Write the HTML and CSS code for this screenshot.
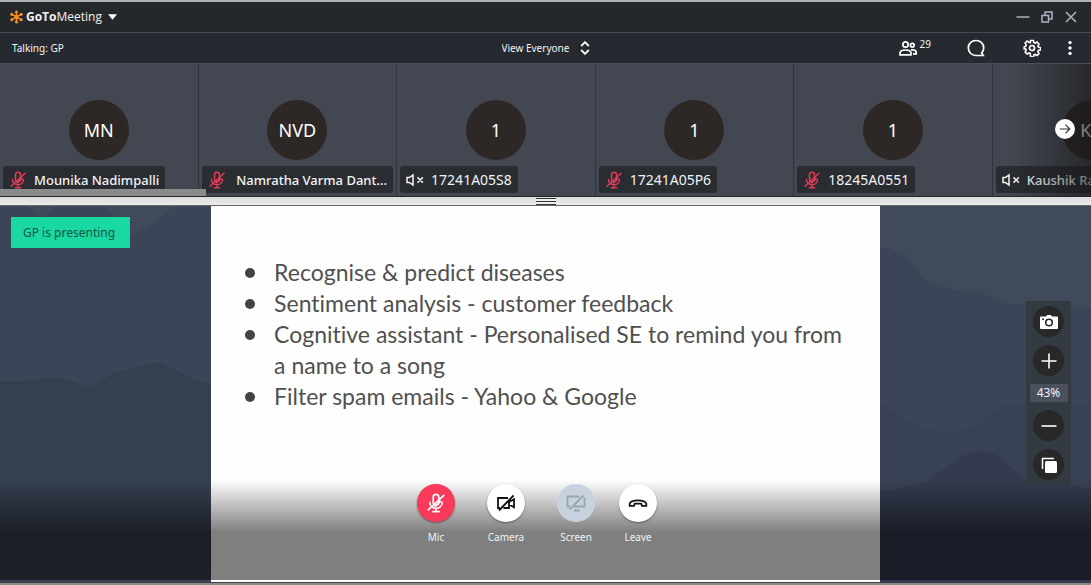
FILE: index.html
```html
<!DOCTYPE html>
<html lang="en">
<head>
<meta charset="utf-8">
<title>GoToMeeting</title>
<link rel="stylesheet" href="styles.css">
</head>
<body>
<svg class="defs" aria-hidden="true">
  <defs>
    <symbol id="mic-off" viewBox="0 0 18 18">
      <g fill="none" stroke="currentColor" stroke-width="1.5" stroke-linecap="round">
        <rect x="6.5" y="1.2" width="5" height="9.6" rx="2.5"/>
        <path d="M3.5 8.5c0 7 11 7 11 0M9 13.8v2.7M6.3 16.8h5.4M2 15.2L16 2.2M8.2 12L13 7.6"/>
      </g>
    </symbol>
    <symbol id="sound-off" viewBox="0 0 18 18">
      <g fill="none" stroke="currentColor" stroke-width="1.5">
        <path d="M1 6.600h2.400L7 3.900v10.200L3.400 11.400H1zM11.500 6.400l5.400 5.200M16.900 6.400l-5.400 5.200"/>
      </g>
    </symbol>
  </defs>
</svg>

<header class="titlebar">
  <button class="brand" type="button">
    <svg class="brand-mark" viewBox="0 0 14 14" aria-hidden="true">
      <g stroke="#f68d1f" stroke-width="1.5" fill="#f68d1f">
        <path d="M7 1.5v11M2.2 4.2l9.6 5.6M2.2 9.8l9.6-5.6"/>
        <g stroke="none"><circle cx="7" cy="7" r="2.3"/><circle cx="7" cy="1.7" r="1.7"/><circle cx="7" cy="12.300" r="1.7"/><circle cx="2" cy="4.1" r="1.7"/><circle cx="12" cy="4.1" r="1.7"/><circle cx="2" cy="9.9" r="1.7"/><circle cx="12" cy="9.9" r="1.7"/></g>
      </g>
    </svg>
    <span class="brand-name"><b>GoTo</b>Meeting</span>
    <svg class="brand-caret" viewBox="0 0 10 6" aria-hidden="true"><path d="M0 0h10L5 6z" fill="#fff"/></svg>
  </button>
  <div class="window-buttons">
    <button type="button" aria-label="Minimize"><svg viewBox="0 0 14 14"><path d="M.5 7h13"/></svg></button>
    <button type="button" aria-label="Restore"><svg viewBox="0 0 14 14"><path d="M2 5.500h6.500v6.500H2zM5 5.500V2h7v7H8.500"/></svg></button>
    <button type="button" aria-label="Close"><svg viewBox="0 0 14 14"><path d="M2 2l10 10M12 2L2 12"/></svg></button>
  </div>
</header>

<div class="toolbar">
  <p class="talking">Talking: GP</p>
  <label class="view">
    <select aria-label="View"><option>View Everyone</option></select>
    <svg viewBox="0 0 10 14" aria-hidden="true"><path d="M1.200 5L5 1.200 8.800 5M1.200 9L5 12.800 8.800 9"/></svg>
  </label>
  <div class="tools">
    <button class="people" type="button" aria-label="Attendees, 29">
      <svg viewBox="0 0 18 18"><circle cx="6.500" cy="5.500" r="2.700"/><circle cx="13.300" cy="6.200" r="1.900"/><path d="M1 15.800v-1.500c0-2 2-3.300 5.500-3.300s5.500 1.300 5.500 3.300v1.500zM12 10.900c3.300-.4 5.200.8 5.200 2.500v1.500H14"/></svg>
      <span>29</span>
    </button>
    <button type="button" aria-label="Chat"><svg viewBox="0 0 18 18"><path d="M9 1.500c4.500 0 7.700 3.100 7.700 7.300 0 2.200-.8 3.900-2 5.200l1.500 2.500H9c-4.600 0-7.700-3.400-7.700-7.700S4.500 1.500 9 1.500z"/></svg></button>
    <div class="tools-end">
      <button type="button" aria-label="Settings"><svg viewBox="0 0 18 18"><circle cx="9" cy="9" r="2.500"/><path d="M7.500 1h3l.5 2.300 1.300.5 2-1.200 2.100 2.100-1.200 2 .5 1.300 2.300.5v2.600l-2.300.5-.5 1.300 1.200 2-2.100 2.100-2-1.200-1.300.5-.5 2.300h-3L7 14.700l-1.300-.5-2 1.200-2.100-2.100 1.200-2-.5-1.300L0.600 9.900V7.800L2.300 7l.5-1.300-1.200-2 2.100-2.100 2 1.200L7 3.300z" transform="translate(.6 .6) scale(.94)"/></svg></button>
      <button type="button" aria-label="More"><svg class="dots" viewBox="0 0 18 18"><circle cx="9" cy="3.600" r="1.700"/><circle cx="9" cy="9" r="1.700"/><circle cx="9" cy="14.400" r="1.700"/></svg></button>
    </div>
  </div>
</div>

<section class="strip" aria-label="Attendees">
  <ul class="tiles">
    <li class="tile"><span class="avatar">MN</span><span class="name muted person"><svg><use href="#mic-off"/></svg>Mounika Nadimpalli</span></li>
    <li class="tile"><span class="avatar">NVD</span><span class="name muted person full"><svg><use href="#mic-off"/></svg>Namratha Varma Dant...</span></li>
    <li class="tile"><span class="avatar">1</span><span class="name"><svg><use href="#sound-off"/></svg>17241A05S8</span></li>
    <li class="tile"><span class="avatar">1</span><span class="name muted"><svg><use href="#mic-off"/></svg>17241A05P6</span></li>
    <li class="tile"><span class="avatar">1</span><span class="name muted"><svg><use href="#mic-off"/></svg>18245A0551</span></li>
    <li class="tile"><span class="avatar">KR</span><span class="name person"><svg><use href="#sound-off"/></svg>Kaushik Ra</span></li>
  </ul>
  <div class="strip-fade"></div>
  <button class="next" type="button" aria-label="Next attendees"><svg viewBox="0 0 20 20"><path d="M3.500 10h12.500M10.500 4.500L16 10l-5.500 5.500"/></svg></button>
  <div class="scroll-thumb"></div>
</section>

<div class="splitter"><span class="grip"></span></div>

<main class="stage">
  <svg class="scenery" viewBox="0 0 1091 376" preserveAspectRatio="none" aria-hidden="true">
    <rect width="1091" height="376" fill="#404a5b"/>
    <path d="M0 0h25l17 12L56 0h49l25 30 22-12L176 0h500l203 42h9l15 6c10 8 15 20 23 27l39 12 15-1 28 12h22l61 4v274H0z" fill="#3c4457"/>
    <path d="M0 175h25l30-4 20 5 15 6 20-13 25-7 18-5h9l13 7 20 10 16 4 668 19 41 24q30 12 60-4l23-17 88-3v179H0z" fill="#394254"/>
    <path d="M0 175h25l30-4 20 5 15 6 20-13 25-7 18-5h9l13 7 20 10 16 4v191H0z" fill="#363f50"/>
    <path d="M879 286l46-10 40-27q16-8 32 0l30 26 64 7v94H879z" fill="#343b4e"/>
  </svg>
  <article class="slide">
    <ul class="points">
      <li>Recognise &amp; predict diseases</li>
      <li>Sentiment analysis - customer feedback</li>
      <li>Cognitive assistant - Personalised SE to remind you from a name to a song</li>
      <li>Filter spam emails - Yahoo &amp; Google</li>
    </ul>
  </article>
  <p class="presenting">GP is presenting</p>
  <div class="controls">
    <div class="sharing">
      <div class="control"><button class="round red" type="button" aria-labelledby="mic-l"><svg><use href="#mic-off"/></svg></button><span id="mic-l">Mic</span></div>
      <div class="control"><button class="round" type="button" aria-labelledby="cam-l"><svg viewBox="0 0 20 20"><path d="M12 5H2v10h2M7.500 15H13V8.500M13 9l5-2.800v8L13 11.500M3 17.500L17.500 2.500"/></svg></button><span id="cam-l">Camera</span></div>
      <div class="control"><button class="round off" type="button" aria-labelledby="scr-l" disabled><svg viewBox="0 0 20 20"><path d="M13.500 3.500H1.500v10h2.500M8 13.500h10.500v-9M8 17.500h6M3.500 16.500L17.500 2.500"/></svg></button><span id="scr-l">Screen</span></div>
    </div>
    <div class="control"><button class="round" type="button" aria-labelledby="leave-l"><svg viewBox="0 0 20 20"><path d="M1.700 12.800v-2.300C3.500 6.300 16.500 6.300 18.300 10.500v2.300h-4.300l-.8-2.100H6.800L6 12.800z"/></svg></button><span id="leave-l">Leave</span></div>
  </div>
  <div class="zoom">
    <button type="button" aria-label="Snapshot"><svg viewBox="0 0 18 18"><path d="M1 3.500h5L7.200 2h3.600L12 3.500h5q1 0 1 1V15q0 1-1 1H1q-1 0-1-1V4.500q0-1 1-1z" fill="#fff"/><circle cx="9" cy="9.500" r="3.300" fill="#fff" stroke="#282828" stroke-width="1.600"/><circle cx="3" cy="6.200" r="1" fill="#282828"/></svg></button>
    <button type="button" aria-label="Zoom in"><svg viewBox="0 0 18 18"><path d="M9 1.500v15M1.500 9h15" stroke="#fff" stroke-width="1.600"/></svg></button>
    <output>43%</output>
    <button type="button" aria-label="Zoom out"><svg viewBox="0 0 18 18"><path d="M1.500 9h15" stroke="#fff" stroke-width="1.600"/></svg></button>
    <button type="button" aria-label="Fit"><svg viewBox="0 0 18 18"><rect x="5" y="5" width="12" height="12" rx="1.500" fill="#fff"/><path d="M2.500 13V2.500H14" fill="none" stroke="#fff" stroke-width="1.500"/></svg></button>
  </div>
</main>
<footer class="edge"></footer>
</body>
</html>
```
FILE: styles.css
```css
* { box-sizing: border-box; }

body {
  margin: 0;
  min-height: 100vh;
  display: flex;
  flex-direction: column;
  background: #272a2f;
  color: #f2f3f5;
  font-family: "Noto Sans", "Open Sans", sans-serif;
  font-size: 10px;
}

p, ul { margin: 0; padding: 0; }
ul { list-style: none; }

button, select {
  margin: 0;
  padding: 0;
  border: 0;
  background: none;
  color: inherit;
  font: inherit;
}

.defs { position: absolute; width: 0; height: 0; }

.titlebar {
  display: flex;
  justify-content: space-between;
  align-items: center;
  height: 33px;
  padding: 0 8px 0 10px;
  border-top: 2px solid #a9b5b3;
  border-bottom: 1px solid #474b52;
  background: #25282b;
}

.brand { display: flex; align-items: center; gap: 3px; }
.brand-mark { width: 13px; height: 14px; }
.brand-name { font-family: "Open Sans", sans-serif; font-size: 12px; line-height: 20px; }
.brand-caret { width: 9px; height: 6px; margin-left: 3px; }

.window-buttons { display: flex; }
.window-buttons button { display: grid; place-items: center; width: 24px; height: 24px; }
.window-buttons svg { width: 14px; height: 14px; fill: none; stroke: #aeb1c4; stroke-width: 1.5; }

.toolbar {
  display: grid;
  grid-template-columns: 1fr auto 1fr;
  align-items: center;
  height: 31px;
  padding: 0 12px;
  border-bottom: 1px solid #4b4f57;
  background: #262a30;
}

.view { display: flex; align-items: center; gap: 10px; }
.view select { appearance: none; }
.view svg { width: 10px; height: 14px; fill: none; stroke: #fff; stroke-width: 1.8; }

.tools { display: flex; justify-content: flex-end; align-items: center; gap: 36px; }
.tools button { display: flex; }
.tools svg { width: 18px; height: 18px; fill: none; stroke: #fff; stroke-width: 1.7; }
.tools .dots { fill: #fff; stroke: none; }
.tools-end { display: flex; gap: 20px; padding-left: 2px; }
.people { gap: 3px; }
.people span { line-height: 10px; }

.strip { position: relative; overflow: hidden; border-bottom: 1px solid #24272c; background: #434751; }
.tiles { display: flex; height: 132px; }
.tile {
  flex: 0 0 18.2%;
  min-width: 0;
  display: flex;
  flex-direction: column;
  justify-content: flex-end;
  gap: 6px;
  padding: 0 3px 3px;
  border-right: 1px solid #2f333b;
}
.avatar {
  display: grid;
  place-items: center;
  align-self: center;
  width: 60px;
  height: 60px;
  border-radius: 50%;
  background: #2d2726;
  color: #fff;
  font-size: 18px;
}
.name {
  align-self: flex-start;
  display: flex;
  align-items: center;
  gap: 7px;
  height: 27px;
  padding: 0 6px;
  border-radius: 3px;
  background: #292c31;
  font-size: 14px;
  white-space: nowrap;
}
.person { font-size: 13px; font-weight: 500; }
.full { align-self: stretch; justify-content: space-between; }
.name svg { width: 18px; height: 18px; }
.muted svg { color: #e23b58; }

.strip-fade {
  position: absolute;
  inset: 0 0 0 auto;
  width: 80px;
  background: linear-gradient(to right, transparent, rgba(20, 20, 20, 0.6));
}
.next {
  position: absolute;
  top: 55px;
  right: 16px;
  display: grid;
  place-items: center;
  width: 20px;
  height: 20px;
  border-radius: 50%;
  background: #fff;
}
.next svg { width: 16px; height: 16px; fill: none; stroke: #333; stroke-width: 1.4; }
.scroll-thumb { position: absolute; left: 0; bottom: 0; width: 206px; height: 7px; background: #8b8b8b; }

.splitter {
  display: grid;
  place-items: center;
  height: 9px;
  border-bottom: 1px solid #626a6c;
  background: linear-gradient(#dcdcdc, #ececec);
}
.grip { width: 20px; height: 7px; border: solid #333; border-width: 1px 0; background: linear-gradient(#eee 2px, #333 2px, #333 3px, #eee 3px); }

.stage {
  position: relative;
  flex: 1;
  display: flex;
  justify-content: center;
}
.scenery { position: absolute; inset: 0; width: 100%; height: 100%; }
.slide {
  position: relative;
  width: 61.3%;
  min-height: 340px;
  padding: 51px 36px 0 34px;
  background: #fdfefd;
  color: #505050;
}
.points {
  font-family: Lato, "Open Sans", sans-serif;
  font-size: 23px;
  font-variant-ligatures: none;
  line-height: 31px;
}
.points li { display: flex; gap: 19px; }
.points li::before { content: ""; flex: none; width: 10px; height: 10px; margin-top: 11px; border-radius: 50%; background: #434343; }

.presenting {
  position: absolute;
  top: 11px;
  left: 11px;
  padding: 0 15px 0 12px;
  background: #19d8a2;
  color: #175443;
  font-size: 12px;
  line-height: 31px;
}

.controls {
  position: absolute;
  inset: auto 0 2px;
  display: flex;
  justify-content: center;
  gap: 24px;
  height: 106px;
  padding: 10px 17px 0 0;
  background: linear-gradient(transparent 6px, rgba(0, 0, 0, 0.5) 58px);
}
.sharing { display: flex; gap: 32px; }
.control { display: flex; flex-direction: column; align-items: center; gap: 7px; width: 38px; line-height: 16px; }
.round {
  display: grid;
  place-items: center;
  width: 38px;
  height: 38px;
  border-radius: 50%;
  background: #fff;
  box-shadow: 0 1px 2px rgba(0, 0, 0, 0.4);
  color: #111;
}
.round svg { width: 20px; height: 20px; fill: none; stroke: currentColor; stroke-width: 1.8; }
.red { background: #f93a5b; color: #fff; }
.off { background: #c8d2de; color: #98a3b0; box-shadow: none; }

.zoom {
  position: absolute;
  top: 95px;
  right: 20px;
  display: flex;
  flex-direction: column;
  align-items: center;
  gap: 8px;
  width: 45px;
  padding: 5px 0;
  background: #343a41;
}
.zoom button { display: grid; place-items: center; width: 31px; height: 31px; border-radius: 50%; background: #282828; }
.zoom svg { width: 18px; height: 18px; }
.zoom output { width: 38px; background: #4a505c; font-size: 12px; line-height: 18px; text-align: center; }

.edge { height: 3px; border-top: 1px solid #3a3f48; background: #8a8a8a; }
```
